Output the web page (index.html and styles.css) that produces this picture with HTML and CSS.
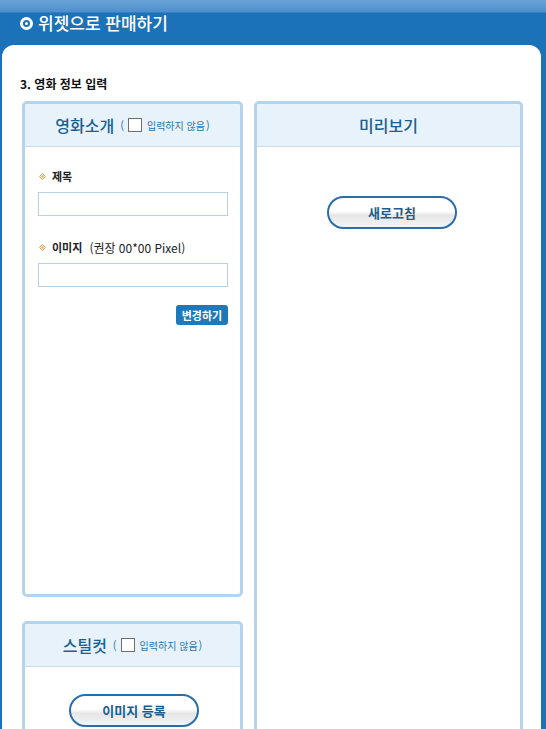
FILE: index.html
```html
<!DOCTYPE html>
<html lang="ko">
<head>
<meta charset="utf-8">
<title>위젯으로 판매하기</title>
<link rel="stylesheet" href="styles.css">
</head>
<body>
<div class="page">
  <header class="topbar">
    <span class="ring-icon"><span class="ring-inner"></span></span>
    <h1 class="topbar-title">위젯으로 판매하기</h1>
  </header>
  <main class="sheet">
    <h2 class="step-title">3. 영화 정보 입력</h2>
    <div class="columns">
      <div class="col-left">
        <section class="panel panel-intro">
          <div class="panel-head">
            <span class="panel-name">영화소개</span>
            <span class="skip">(<span class="checkbox"></span><span class="skip-text">입력하지 않음</span>)</span>
          </div>
          <div class="panel-body form-body">
            <div class="field-label"><svg class="bullet" width="7" height="7" viewBox="0 0 7 7"><path d="M3.5 0.5 L6.5 3.5 L3.5 6.5 L0.5 3.5 Z" fill="none" stroke="#e39a3a" stroke-width="1"/><rect x="2.5" y="2.5" width="2" height="2" fill="#e39a3a"/></svg><b>제목</b></div>
            <div class="text-input"></div>
            <div class="field-label field-gap"><svg class="bullet" width="7" height="7" viewBox="0 0 7 7"><path d="M3.5 0.5 L6.5 3.5 L3.5 6.5 L0.5 3.5 Z" fill="none" stroke="#e39a3a" stroke-width="1"/><rect x="2.5" y="2.5" width="2" height="2" fill="#e39a3a"/></svg><b>이미지</b><span class="hint">(권장 00*00 Pixel)</span></div>
            <div class="text-input"></div>
            <div class="btn-row"><span class="btn-change">변경하기</span></div>
          </div>
        </section>
        <section class="panel panel-still">
          <div class="panel-head">
            <span class="panel-name">스틸컷</span>
            <span class="skip">(<span class="checkbox"></span><span class="skip-text">입력하지 않음</span>)</span>
          </div>
          <div class="panel-body still-body">
            <span class="pill-btn">이미지 등록</span>
          </div>
        </section>
      </div>
      <div class="col-right">
        <section class="panel panel-preview">
          <div class="panel-head">
            <span class="panel-name">미리보기</span>
          </div>
          <div class="panel-body preview-body">
            <span class="pill-btn">새로고침</span>
          </div>
        </section>
      </div>
    </div>
  </main>
</div>
</body>
</html>
```
FILE: styles.css
```css
html, body {
  margin: 0;
  padding: 0;
  height: 100%;
  overflow: hidden;
}
body {
  background: #1c72b8;
  font-family: "Noto Sans CJK KR", "Noto Sans", "Liberation Sans", sans-serif;
  color: #222;
}
.page {
  background: linear-gradient(to bottom, #6aa3d8 0px, #4e8fcc 12px, #1c72b8 13px, #1c72b8 100%);
  height: 729px;
  overflow: hidden;
}
.topbar {
  height: 45px;
  display: flex;
  align-items: center;
  padding-left: 20px;
  padding-top: 1px;
  box-sizing: border-box;
}
.ring-icon {
  width: 13px;
  height: 13px;
  border-radius: 50%;
  background: #ffffff;
  display: flex;
  align-items: center;
  justify-content: center;
  margin-right: 5px;
  margin-top: 1px;
}
.ring-inner {
  width: 3px;
  height: 3px;
  border-radius: 50%;
  border: 2px solid #1c72b8;
  background: #fff;
}
.topbar-title {
  margin: 0;
  font-size: 17px;
  font-weight: 500;
  color: #ffffff;
  line-height: 20px;
}
.sheet {
  margin: 0 5px 0 2px;
  background: #ffffff;
  border-radius: 12px 12px 0 0;
  padding: 30px 18px 0 20px;
  height: 684px;
  box-sizing: border-box;
  overflow: hidden;
}
.step-title {
  margin: 0 0 9px -2px;
  font-size: 12px;
  font-weight: bold;
  line-height: 17px;
  color: #111;
}
.columns {
  display: flex;
  gap: 11px;
  align-items: flex-start;
}
.col-left {
  width: 221px;
  display: flex;
  flex-direction: column;
  gap: 24px;
}
.col-right {
  width: 269px;
}
.panel {
  border: 3px solid #b5d3ea;
  border-radius: 5px;
  background: #ffffff;
  box-sizing: border-box;
}
.panel-head {
  height: 42px;
  background: #e7f2fa;
  border-bottom: 1px solid #c6def0;
  border-radius: 2px 2px 0 0;
  display: flex;
  align-items: center;
  justify-content: center;
}
.panel-name {
  font-size: 16px;
  font-weight: 500;
  color: #1a6090;
  line-height: 20px;
}
.skip {
  display: flex;
  align-items: center;
  font-size: 11px;
  color: #2a78b0;
  margin-left: 6px;
}
.checkbox {
  width: 12px;
  height: 12px;
  border: 1px solid #6f6f6f;
  background: #fff;
  margin: 0 5px 0 4px;
}
.skip-text {
  font-size: 10px;
  color: #2a78b0;
  margin-right: 1px;
}
.panel-intro {
  height: 496px;
}
.form-body {
  padding: 22px 12px 0 13px;
}
.field-label {
  display: flex;
  align-items: center;
  height: 14px;
  font-size: 11px;
  color: #222;
}
.field-label b {
  font-weight: bold;
}
.bullet {
  margin: 0 6px 0 1px;
}
.hint {
  font-size: 12px;
  margin-left: 7px;
  color: #222;
}
.field-gap {
  margin-top: 24px;
}
.text-input {
  height: 24px;
  border: 1px solid #b9d0e2;
  box-sizing: border-box;
  margin-top: 9px;
}
.btn-row {
  display: flex;
  justify-content: flex-end;
  margin-top: 18px;
}
.btn-change {
  display: inline-block;
  width: 52px;
  height: 20px;
  line-height: 20px;
  background: #1f79b8;
  color: #ffffff;
  font-size: 11px;
  font-weight: bold;
  text-align: center;
  border-radius: 3px;
}
.panel-still {
  height: 200px;
}
.still-body {
  display: flex;
  justify-content: center;
  padding: 27px 0 0 3px;
}
.panel-preview {
  height: 700px;
}
.preview-body {
  display: flex;
  justify-content: center;
  padding: 49px 0 0 7px;
}
.pill-btn {
  display: inline-block;
  width: 130px;
  height: 33px;
  box-sizing: border-box;
  border: 2px solid #2a6ea8;
  border-radius: 17px;
  background: linear-gradient(to bottom, #ffffff 0%, #ffffff 45%, #e6e6e6 60%, #f4f4f4 100%);
  color: #1a5e90;
  font-size: 13px;
  font-weight: bold;
  text-align: center;
  line-height: 29px;
}
```
